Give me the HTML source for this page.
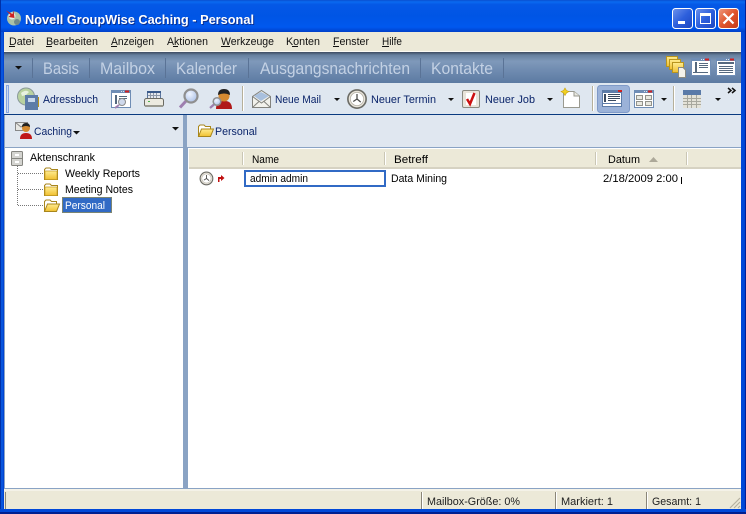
<!DOCTYPE html>
<html><head><meta charset="utf-8"><style>
html,body{margin:0;padding:0;background:#fff;overflow:hidden}
svg{display:block}
text{font-family:"Liberation Sans",sans-serif;font-size:11px;fill:#000;white-space:pre}
.c{shape-rendering:crispEdges}
.m{fill:#111}
.t{fill:#0a246a}
.n{font-size:17px;fill:#c3d1e4}
</style></head><body>
<svg width="746" height="514" viewBox="0 0 746 514" xmlns="http://www.w3.org/2000/svg">
<defs>
<linearGradient id="tb" x1="0" y1="0" x2="0" y2="1">
<stop offset="0" stop-color="#0a4fd0"/><stop offset=".06" stop-color="#0a6af0"/><stop offset=".14" stop-color="#0558e6"/><stop offset=".5" stop-color="#0055e5"/><stop offset=".85" stop-color="#0058ee"/><stop offset="1" stop-color="#0040c8"/>
</linearGradient>
<linearGradient id="nv" x1="0" y1="0" x2="0" y2="1">
<stop offset="0" stop-color="#3c4a60"/><stop offset=".1" stop-color="#66809f"/><stop offset=".3" stop-color="#7f99ba"/><stop offset=".6" stop-color="#6f8bb0"/><stop offset="1" stop-color="#5c7aa2"/>
</linearGradient>
<linearGradient id="bb" x1="0" y1="0" x2="1" y2="1"><stop offset="0" stop-color="#6f93ec"/><stop offset=".5" stop-color="#2d5fdc"/><stop offset="1" stop-color="#1c45c0"/></linearGradient>
<linearGradient id="rb" x1="0" y1="0" x2="1" y2="1"><stop offset="0" stop-color="#ee9a80"/><stop offset=".5" stop-color="#e0542c"/><stop offset="1" stop-color="#c23a18"/></linearGradient>
<linearGradient id="fo" x1="0" y1="0" x2="0" y2="1"><stop offset="0" stop-color="#ffec90"/><stop offset="1" stop-color="#f0c030"/></linearGradient>
<radialGradient id="lens" cx=".4" cy=".35" r=".7"><stop offset="0" stop-color="#f0f5ff"/><stop offset="1" stop-color="#a9bfe6"/></radialGradient>
<g id="folder"><path d="M.5 12.500V2.500L2 1h4l1.500 1.500H13.500V12.500Z" fill="#fff" stroke="#a8861c"/><path d="M1 12.500V4H13V12.500Z" fill="url(#fo)" stroke="#c49a22" stroke-width=".7"/></g>
<g id="ofolder"><path d="M.5 12.500V2.500L2 1h4l1.500 1.500H12.500V5" fill="#fff" stroke="#a8861c"/><path d="M.5 12.500L3.500 5H15.500L12.500 12.500Z" fill="url(#fo)" stroke="#a8861c"/></g>
<g id="win"><rect x="0" y="0" width="20" height="18" fill="#6f8db5"/><rect x="1" y="3" width="18" height="14" fill="#fff"/><rect x="14" y="0.500" width="4" height="2" fill="#d02020"/><rect x="10" y="1" width="1" height="1" fill="#dfe7f0"/><rect x="12" y="1" width="1" height="1" fill="#dfe7f0"/></g>
<g id="clock"><circle cx="8" cy="8" r="7.300" fill="#e8e4da" stroke="#6c6c66" stroke-width="1.300"/><circle cx="8" cy="8" r="5.300" fill="#fff" stroke="#b5b1a6" stroke-width=".6"/><path d="M8 4V8L11 10.500M8 8L5 10" fill="none" stroke="#4a4a48" stroke-width="1"/></g>
<path id="arr" d="M0 0H7L3.500 3.500Z" fill="#111"/>
<path id="sar" d="M0 0H6L3 3Z" fill="#111"/>
</defs>

<!-- window frame -->
<rect class="c" width="746" height="514" fill="#0044d4"/>
<rect class="c" x="0" y="0" width="746" height="32" fill="url(#tb)"/>
<rect class="c" x="0" y="0" width="1" height="514" fill="#0030a8"/>
<rect class="c" x="745" y="0" width="1" height="514" fill="#00209a"/>
<rect class="c" x="1" y="32" width="2" height="482" fill="#0855dd"/>
<rect class="c" x="741" y="32" width="3" height="482" fill="#0048d8"/>
<rect class="c" x="0" y="509" width="746" height="3" fill="#0048d8"/>
<rect class="c" x="0" y="512" width="746" height="2" fill="#001f90"/>

<!-- title -->
<circle cx="14" cy="18.500" r="7" fill="#a9c2a8"/><circle cx="12" cy="16" r="3.500" fill="#e8eee4"/><circle cx="17" cy="22" r="3" fill="#6f8a8a"/>
<path d="M6 10.500L12.500 14L13.500 10.500L14.500 18L8.500 17L10.500 15Z" fill="#cc2222"/>
<text x="26" y="25" textLength="229" lengthAdjust="spacingAndGlyphs" style="font-size:13px;font-weight:bold;fill:#0a2f90">Novell GroupWise Caching - Personal</text>
<text x="25" y="24" textLength="229" lengthAdjust="spacingAndGlyphs" style="font-size:13px;font-weight:bold;fill:#fff">Novell GroupWise Caching - Personal</text>

<!-- window buttons -->
<rect x="672.500" y="8.500" width="20" height="20" rx="3" fill="url(#bb)" stroke="#fff"/>
<rect class="c" x="678" y="21" width="7" height="3" fill="#fff"/>
<rect x="695.500" y="8.500" width="20" height="20" rx="3" fill="url(#bb)" stroke="#fff"/>
<rect class="c" x="700.500" y="13.500" width="10" height="10" fill="none" stroke="#fff"/><rect class="c" x="700" y="13" width="11" height="3" fill="#fff"/>
<rect x="718.500" y="8.500" width="20" height="20" rx="3" fill="url(#rb)" stroke="#fff"/>
<path d="M723.500 13.500L733.500 23.500M733.500 13.500L723.500 23.500" stroke="#fff" stroke-width="2.200"/>

<!-- menu -->
<rect class="c" x="4" y="32" width="737" height="20" fill="#ece9d8"/>
<rect class="c" x="4" y="51" width="737" height="1" fill="#fbfaf3"/>
<text class="m" x="9" y="45" textLength="25" lengthAdjust="spacingAndGlyphs">Datei</text>
<text class="m" x="46" y="45" textLength="52" lengthAdjust="spacingAndGlyphs">Bearbeiten</text>
<text class="m" x="111" y="45" textLength="43" lengthAdjust="spacingAndGlyphs">Anzeigen</text>
<text class="m" x="167" y="45" textLength="41" lengthAdjust="spacingAndGlyphs">Aktionen</text>
<text class="m" x="221" y="45" textLength="53" lengthAdjust="spacingAndGlyphs">Werkzeuge</text>
<text class="m" x="286" y="45" textLength="34" lengthAdjust="spacingAndGlyphs">Konten</text>
<text class="m" x="333" y="45" textLength="36" lengthAdjust="spacingAndGlyphs">Fenster</text>
<text class="m" x="382" y="45" textLength="20" lengthAdjust="spacingAndGlyphs">Hilfe</text>
<g class="c" fill="#111"><rect x="9" y="46" width="6" height="1"/><rect x="46" y="46" width="6" height="1"/><rect x="111" y="46" width="6" height="1"/><rect x="173" y="46" width="5" height="1"/><rect x="221" y="46" width="9" height="1"/><rect x="292" y="46" width="6" height="1"/><rect x="333" y="46" width="6" height="1"/><rect x="382" y="46" width="7" height="1"/></g>

<!-- nav bar -->
<rect class="c" x="4" y="52" width="737" height="31" fill="url(#nv)"/>
<use href="#arr" x="15" y="66"/>
<g class="c" fill="#5a7396"><rect x="32" y="58" width="1" height="20"/><rect x="89" y="58" width="1" height="20"/><rect x="165" y="58" width="1" height="20"/><rect x="248" y="58" width="1" height="20"/><rect x="420" y="58" width="1" height="20"/><rect x="503" y="58" width="1" height="20"/></g>
<text class="n" x="43" y="74" textLength="36" lengthAdjust="spacingAndGlyphs">Basis</text>
<text class="n" x="100" y="74" textLength="55" lengthAdjust="spacingAndGlyphs">Mailbox</text>
<text class="n" x="176" y="74" textLength="61" lengthAdjust="spacingAndGlyphs">Kalender</text>
<text class="n" x="260" y="74" textLength="150" lengthAdjust="spacingAndGlyphs">Ausgangsnachrichten</text>
<text class="n" x="431" y="74" textLength="62" lengthAdjust="spacingAndGlyphs">Kontakte</text>
<!-- nav right icons -->
<g fill="url(#fo)" stroke="#b8951e"><rect x="666.500" y="56.500" width="11" height="10"/><rect x="669.500" y="59.500" width="11" height="10"/><rect x="672.500" y="62.500" width="11" height="10"/></g>
<path d="M678.500 77.500V67.500H683L685.500 70V77.500Z" fill="#f4f2ea" stroke="#8a8a80"/>
<use href="#win" x="691" y="58"/>
<g class="c" fill="#56697f"><rect x="695" y="62" width="2" height="10"/><rect x="699" y="63" width="9" height="1"/><rect x="699" y="65" width="9" height="1"/><rect x="699" y="67" width="9" height="1"/><rect x="693" y="72" width="15" height="1"/></g>
<use href="#win" x="716" y="58"/>
<g class="c" fill="#56697f"><rect x="718" y="62" width="16" height="2"/><rect x="719" y="66" width="14" height="1"/><rect x="719" y="68" width="14" height="1"/><rect x="719" y="70" width="14" height="1"/><rect x="719" y="72" width="14" height="1"/></g>

<!-- toolbar -->
<rect class="c" x="4" y="83" width="737" height="31" fill="#dfe7f0"/>
<rect class="c" x="4" y="114" width="737" height="1" fill="#0a3a80"/>
<rect class="c" x="6.500" y="85.500" width="2" height="27" fill="#cfdcf0" stroke="#86a5e0"/>
<!-- adressbuch -->
<circle cx="26" cy="96.500" r="8.500" fill="#b9d2a0" stroke="#8a9a9a"/><path d="M21 93q5-4 8-1l-3 3-4 1Z" fill="#e8f2e0"/>
<rect class="c" x="25" y="95" width="13" height="15" fill="#5d7ca8"/><rect class="c" x="28" y="98" width="7" height="4" fill="#c8d8ec"/><g class="c" fill="#b8951e"><rect x="38" y="97" width="1" height="10"/></g>
<text class="t" x="43" y="103" textLength="55" lengthAdjust="spacingAndGlyphs">Adressbuch</text>
<!-- find doc -->
<use href="#win" x="111" y="90"/>
<rect class="c" x="115" y="95" width="2" height="9" fill="#56697f"/><g class="c" fill="#56697f"><rect x="119" y="96" width="8" height="1"/><rect x="119" y="98" width="8" height="1"/></g>
<circle cx="122" cy="102" r="3.500" fill="#cfd9ec" stroke="#8a8a8a"/><path d="M119 105L115 108" stroke="#a080b0" stroke-width="2"/>
<!-- printer -->
<rect x="147.500" y="91.500" width="13" height="7" fill="#e4e8ee" stroke="#3a5a8a" stroke-width=".8"/><rect class="c" x="147" y="91" width="14" height="2" fill="#3a5a8a"/>
<path class="c" d="M150.500 93V98M153.500 93V98M156.500 93V98M148 95.500H160" stroke="#8d98a8" fill="none"/>
<rect x="144.500" y="98.500" width="19" height="8" rx="2" fill="#eceae0" stroke="#6a6a62"/><rect class="c" x="148" y="101" width="2" height="1" fill="#50b050"/><rect class="c" x="145" y="105" width="18" height="2" fill="#9a9a90"/>
<!-- magnifier -->
<path d="M186 101L180 107.500" stroke="#9e7fb0" stroke-width="3"/>
<circle cx="191" cy="96" r="6.500" fill="url(#lens)" stroke="#8f8f8f" stroke-width="2.200"/>
<!-- person search -->
<path d="M216 109q0-8 7-8h2q7 0 7 8Z" fill="#b01818"/><circle cx="224" cy="96" r="5.500" fill="#d58a30"/><path d="M218 95q0-6 6-6t6 6q-6-3-12 0Z" fill="#222"/>
<path d="M214.500 104L210 108" stroke="#9e7fb0" stroke-width="2.200"/>
<circle cx="217" cy="101.500" r="3.800" fill="url(#lens)" stroke="#8f8f8f" stroke-width="1.500"/>
<rect class="c" x="242" y="86" width="1" height="25" fill="#b6b09a"/><rect class="c" x="243" y="86" width="1" height="25" fill="#fff"/>
<!-- mail -->
<path d="M252.500 96.500L261.500 90.500L270.500 96.500V107.500H252.500Z" fill="#f2f2ec" stroke="#83837e"/><path d="M254 96L261 92L269 96L261 101Z" fill="#a9c0de"/><path d="M252.500 107.500L259 101.500M270.500 107.500L264 101.500M252.500 96.500L261.500 103L270.500 96.500" fill="none" stroke="#83837e"/>
<text class="t" x="275" y="103" textLength="46" lengthAdjust="spacingAndGlyphs">Neue Mail</text>
<use href="#sar" x="334" y="98"/>
<use href="#clock" transform="translate(347,89) scale(1.250)"/>
<text class="t" x="371" y="103" textLength="65" lengthAdjust="spacingAndGlyphs">Neuer Termin</text>
<use href="#sar" x="448" y="98"/>
<!-- job -->
<rect x="462.500" y="90.500" width="17" height="17" rx="1.500" fill="#e8e4da" stroke="#8a8a80"/><rect class="c" x="466" y="93" width="10" height="12" fill="#fff"/>
<path d="M467 99L470 104L474.500 93" fill="none" stroke="#cc1111" stroke-width="2.500"/>
<text class="t" x="485" y="103" textLength="50" lengthAdjust="spacingAndGlyphs">Neuer Job</text>
<use href="#sar" x="547" y="98"/>
<!-- new doc -->
<path d="M563.500 91.500H574L579.500 96V107.500H563.500Z" fill="#fff" stroke="#9a9a90"/><path d="M574 91.500V96H579.500" fill="#e8e8e0" stroke="#9a9a90"/><path d="M565 88L566.500 90.500L569 91.500L566.500 93L565 95.500L563.500 93L561 91.500L563.500 90.500Z" fill="#f0d020" stroke="#c8a010" stroke-width=".6"/>
<rect class="c" x="592" y="86" width="1" height="25" fill="#b6b09a"/><rect class="c" x="593" y="86" width="1" height="25" fill="#fff"/>
<!-- active view button -->
<rect x="597.500" y="85.500" width="32" height="27" rx="3" fill="#9bb2d8" stroke="#7f9ac8"/>
<rect class="c" x="602" y="90" width="20" height="17" fill="#5d7ca8"/><rect class="c" x="603" y="93" width="18" height="10" fill="#fff"/><rect class="c" x="603" y="104" width="18" height="2" fill="#fff"/><rect class="c" x="618" y="90" width="4" height="2" fill="#d02020"/>
<g class="c" fill="#3a4a60"><rect x="604" y="94" width="2" height="8"/><rect x="608" y="94" width="12" height="1"/><rect x="608" y="96" width="12" height="1"/><rect x="608" y="98" width="12" height="1"/><rect x="608" y="100" width="8" height="1"/></g>
<!-- grid view -->
<use href="#win" x="634" y="90"/>
<g fill="#e8e8e0" stroke="#7a7a72" stroke-width=".8"><rect x="636.500" y="95.500" width="6" height="4"/><rect x="645.500" y="95.500" width="6" height="4"/><rect x="636.500" y="101.500" width="6" height="4"/><rect x="645.500" y="101.500" width="6" height="4"/></g>
<use href="#sar" x="661" y="98"/>
<rect class="c" x="673" y="86" width="1" height="25" fill="#b6b09a"/><rect class="c" x="674" y="86" width="1" height="25" fill="#fff"/>
<!-- table -->
<rect class="c" x="683" y="90" width="18" height="5" fill="#5a7aa8"/><rect class="c" x="683" y="95" width="18" height="13" fill="#e4e2d8"/>
<path class="c" d="M687.500 95V108M691.500 95V108M696.500 95V108M683 98.500H701M683 101.500H701M683 104.500H701" stroke="#a8a89e" fill="none"/>
<use href="#sar" x="715" y="98"/>
<path d="M728 88L731 90.500L728 93M732 88L735 90.500L732 93" fill="none" stroke="#111" stroke-width="1.500"/>

<!-- panel headers -->
<rect class="c" x="4" y="115" width="737" height="33" fill="#e0e7f0"/>
<rect class="c" x="4" y="147" width="737" height="1" fill="#8aa3c4"/>
<!-- caching icon -->
<rect x="15.500" y="122.500" width="12" height="8" fill="#e8e8e4" stroke="#888"/><path d="M15.500 122.500L21 127L27.500 122.500" fill="none" stroke="#888"/>
<path d="M20 139q0-6 6-6q6 0 6 6Z" fill="#c01818"/><circle cx="26" cy="128" r="4" fill="#d58a30"/><path d="M22 127q0-4 4-4t4 4q-4-2-8 0Z" fill="#222"/>
<text class="t" x="34" y="135" textLength="38" lengthAdjust="spacingAndGlyphs">Caching</text>
<use href="#arr" x="73" y="131"/>
<use href="#arr" x="172" y="127"/>
<use href="#ofolder" x="198" y="124"/>
<text class="t" x="215" y="135" textLength="42" lengthAdjust="spacingAndGlyphs">Personal</text>

<!-- left tree -->
<rect class="c" x="5" y="148" width="178" height="340" fill="#fff"/>
<rect class="c" x="183" y="115" width="4" height="373" fill="#8aa3c4"/>
<rect class="c" x="187" y="148" width="1" height="340" fill="#8aa3c4"/>
<rect class="c" x="4" y="115" width="1" height="373" fill="#8aa3c4"/>
<rect x="11.500" y="151.500" width="11" height="14" rx="1" fill="#d4d4d0" stroke="#858580"/><rect class="c" x="12" y="158" width="10" height="1" fill="#858580"/><rect class="c" x="15" y="154" width="4" height="2" fill="#fff"/><rect class="c" x="15" y="161" width="4" height="2" fill="#fff"/>
<text x="30" y="161" textLength="65" lengthAdjust="spacingAndGlyphs">Aktenschrank</text>
<path class="c" d="M17.500 166V205.500M18 173.500H43M18 189.500H43M18 205.500H43" stroke="#777" stroke-dasharray="1 1" fill="none"/>
<use href="#folder" x="44" y="167"/>
<use href="#folder" x="44" y="183"/>
<use href="#ofolder" x="44" y="199"/>
<text x="65" y="177" textLength="75" lengthAdjust="spacingAndGlyphs">Weekly Reports</text>
<text x="65" y="193" textLength="68" lengthAdjust="spacingAndGlyphs">Meeting Notes</text>
<rect class="c" x="62" y="197" width="50" height="16" fill="#316ac5"/>
<rect class="c" x="62.500" y="197.500" width="49" height="15" fill="none" stroke="#c8a020" stroke-dasharray="1 1"/>
<text x="65" y="209" textLength="40" lengthAdjust="spacingAndGlyphs" style="fill:#fff">Personal</text>

<!-- list -->
<rect class="c" x="188" y="148" width="553" height="340" fill="#fff"/>
<rect class="c" x="189" y="149" width="552" height="18" fill="#ece9d8"/>
<rect class="c" x="189" y="167" width="552" height="2" fill="#d6d2c2"/>
<g class="c" fill="#cac6b4"><rect x="242" y="152" width="1" height="13"/><rect x="384" y="152" width="1" height="13"/><rect x="595" y="152" width="1" height="13"/><rect x="686" y="152" width="1" height="13"/></g>
<g class="c" fill="#fff"><rect x="243" y="152" width="1" height="13"/><rect x="385" y="152" width="1" height="13"/><rect x="596" y="152" width="1" height="13"/><rect x="687" y="152" width="1" height="13"/></g>
<text x="252" y="163" textLength="27" lengthAdjust="spacingAndGlyphs">Name</text>
<text x="394" y="163" textLength="34" lengthAdjust="spacingAndGlyphs">Betreff</text>
<text x="608" y="163" textLength="32" lengthAdjust="spacingAndGlyphs">Datum</text>
<path d="M649 162L653.500 157L658 162Z" fill="#aca899"/>
<!-- row -->
<use href="#clock" transform="translate(199.500,171.500) scale(.87)"/>
<path d="M218 182V177H221V175L224.500 178L221 181V179H219.500V182Z" fill="#c01010"/>
<rect class="c" x="245" y="171" width="140" height="15" fill="none" stroke="#316ac5" stroke-width="2"/>
<text x="250" y="182" textLength="58" lengthAdjust="spacingAndGlyphs">admin admin</text>
<text x="391" y="182" textLength="56" lengthAdjust="spacingAndGlyphs">Data Mining</text>
<text x="603" y="182" textLength="75" lengthAdjust="spacingAndGlyphs">2/18/2009 2:00</text>
<rect class="c" x="681" y="177" width="1" height="7" fill="#000"/>

<!-- status -->
<rect class="c" x="4" y="488" width="737" height="1" fill="#8aa3c4"/>
<rect class="c" x="4" y="489" width="737" height="2" fill="#f4f2e8"/>
<rect class="c" x="4" y="491" width="737" height="18" fill="#ece9d8"/>
<g class="c" fill="#8a8678"><rect x="5" y="492" width="1" height="17"/><rect x="421" y="492" width="1" height="17"/><rect x="555" y="492" width="1" height="17"/><rect x="646" y="492" width="1" height="17"/></g>
<g class="c" fill="#fff"><rect x="422" y="492" width="1" height="17"/><rect x="556" y="492" width="1" height="17"/><rect x="647" y="492" width="1" height="17"/></g>
<text x="427" y="505" textLength="93" lengthAdjust="spacingAndGlyphs" style="fill:#222">Mailbox-Größe: 0%</text>
<text x="561" y="505" textLength="52" lengthAdjust="spacingAndGlyphs" style="fill:#222">Markiert: 1</text>
<text x="652" y="505" textLength="49" lengthAdjust="spacingAndGlyphs" style="fill:#222">Gesamt: 1</text>
<path d="M730 508L740 498M734 508L740 502M738 508L740 506" stroke="#b5b19f" stroke-width="1.200"/>
</svg>
</body></html>
